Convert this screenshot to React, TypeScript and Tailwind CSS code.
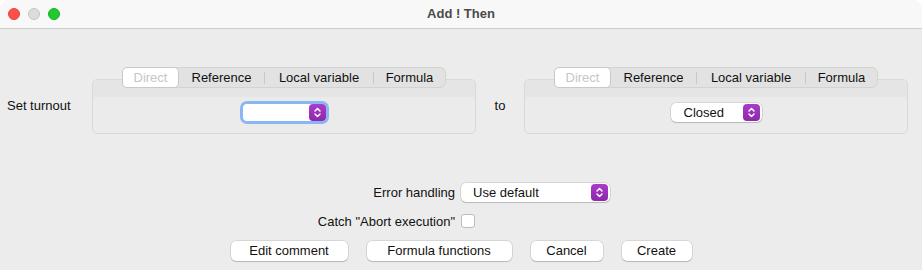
import React from 'react';

const tabs = [
  { label: 'Reference', w: 'w-[85px]' },
  { label: 'Local variable', w: 'w-[108px]' },
  { label: 'Formula', w: 'w-[71px]' },
];

const Stepper = () => (
  <span className="flex h-[17px] w-[17px] shrink-0 items-center justify-center rounded-[4px] bg-linear-to-b from-[#aa3cca] to-[#8d28aa]">
    <svg width="9" height="13" viewBox="0 0 9 13" fill="none" stroke="white" strokeWidth="1.5" strokeLinecap="round" strokeLinejoin="round">
      <path d="M2 5 L4.5 2.5 L7 5" />
      <path d="M2 8 L4.5 10.5 L7 8" />
    </svg>
  </span>
);

const TabbedBox = ({ children }: { children: React.ReactNode }) => (
  <div className="flex w-[384px] flex-col">
    {/* Tab strip */}
    <div className="relative z-10 mx-auto flex h-[21px] w-[324px] items-center rounded-[6px] border border-[#d3d3d3] bg-[#e2e2e2] text-[13px] text-[#111]">
      <div className="-my-px -ml-px flex h-[21px] w-[57px] items-center justify-center rounded-[5px] border border-[#c9c9c9] bg-white text-[#c6c6c6]">
        Direct
      </div>
      <div className={`${tabs[0].w} text-center`}>{tabs[0].label}</div>
      <div className="h-[12px] w-px bg-[#c8c8c8]" />
      <div className={`${tabs[1].w} text-center`}>{tabs[1].label}</div>
      <div className="h-[12px] w-px bg-[#c8c8c8]" />
      <div className={`${tabs[2].w} text-center`}>{tabs[2].label}</div>
    </div>

    {/* Panel */}
    <div className="-mt-[9px] h-[55px] rounded-[5px] border border-[#d9d9d9] bg-[#ebebeb]">
      <div className="h-[17px] rounded-t-[5px] bg-[#e5e5e5]" />
      <div className="flex justify-center pt-[6px]">{children}</div>
    </div>
  </div>
);

const Button = ({ label, w }: { label: string; w: string }) => (
  <div className={`${w} flex h-[20px] items-center justify-center rounded-[5px] bg-white text-[13px] text-[#111] shadow-[0_0_0_0.5px_rgba(0,0,0,0.18),0_1px_1px_rgba(0,0,0,0.14)]`}>
    {label}
  </div>
);

export default function App() {
  return (
    <div className="h-[270px] w-[922px] bg-white font-['Liberation_Sans',Arial,sans-serif]">
      <div className="flex h-full flex-col overflow-hidden rounded-t-[10px] bg-[#ececec]">
        {/* Title bar */}
        <div className="grid h-[29px] grid-cols-[1fr_auto_1fr] items-center border-b border-[#cdcdcd] bg-[#f8f8f8]">
          <div className="flex items-center gap-[8px] pl-[8px]">
            <span className="h-[12px] w-[12px] rounded-full border border-[#e2463f] bg-[#ff4f47]" />
            <span className="h-[12px] w-[12px] rounded-full border border-[#c6c6c6] bg-[#dcdcdc]" />
            <span className="h-[12px] w-[12px] rounded-full border border-[#1aae27] bg-[#1fc92f]" />
          </div>
          <div className="text-[13px] font-bold text-[#4b4b4b]">Add ! Then</div>
          <div />
        </div>

        {/* Set turnout row */}
        <div className="flex items-start pl-[7px] pt-[38px] text-[13px] text-[#111]">
          <div className="mt-[31px] w-[85px] leading-[16px]">Set turnout</div>
          <TabbedBox>
            <div className="mt-px flex h-[17px] w-[83px] justify-end rounded-[4px] bg-white ring-[3px] ring-[#8ab7f3]">
              <Stepper />
            </div>
          </TabbedBox>
          <div className="mt-[31px] w-[48px] text-center leading-[16px]">to</div>
          <TabbedBox>
            <div className="flex h-[19px] w-[91px] items-center justify-between rounded-[5px] bg-white pl-[13px] pr-[2px] shadow-[0_0_0_0.5px_rgba(0,0,0,0.18),0_1px_1px_rgba(0,0,0,0.14)]">
              <span>Closed</span>
              <Stepper />
            </div>
          </TabbedBox>
        </div>

        {/* Options */}
        <div className="mt-[49px] flex justify-center pr-[7px] text-[13px] text-[#111]">
          <div className="grid grid-cols-[150px_149px] items-center gap-x-[6px] gap-y-[9px]">
            <div className="text-right">Error handling</div>
            <div className="flex h-[19px] items-center justify-between rounded-[5px] bg-white pl-[12px] pr-[2px] shadow-[0_0_0_0.5px_rgba(0,0,0,0.18),0_1px_1px_rgba(0,0,0,0.14)]">
              <span>Use default</span>
              <Stepper />
            </div>
            <div className="text-right">Catch "Abort execution"</div>
            <div className="flex h-[19px] items-center">
              <span className="h-[14px] w-[14px] rounded-[3px] border border-[#bcbcbc] bg-white" />
            </div>
          </div>
        </div>

        {/* Buttons */}
        <div className="mt-[10px] flex justify-center gap-[19px]">
          <Button label="Edit comment" w="w-[117px]" />
          <Button label="Formula functions" w="w-[145px]" />
          <Button label="Cancel" w="w-[72px]" />
          <Button label="Create" w="w-[70px]" />
        </div>
      </div>
    </div>
  );
}
